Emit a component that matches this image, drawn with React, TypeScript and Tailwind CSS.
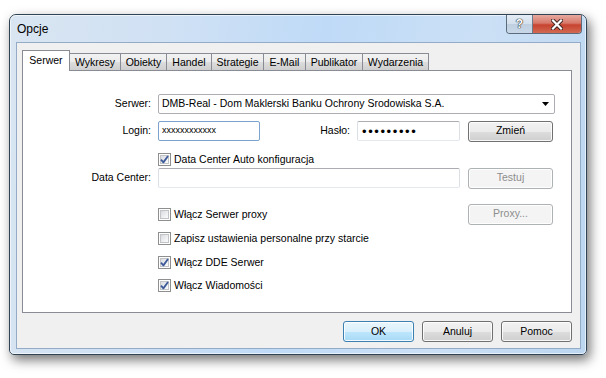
import React from "react";

const btn =
  "h-[21px] rounded-[3px] border text-[10.5px] flex items-center justify-center shadow-[inset_0_0_0_1px_rgba(255,255,255,0.85)]";
const btnNormal =
  "border-[#707070] text-black bg-[linear-gradient(to_bottom,#f2f2f2_0%,#ebebeb_50%,#dddddd_51%,#cfcfcf_100%)]";
const btnDisabled = "border-[#adb2b5] text-[#8d8d8d] bg-[#f4f4f4]";
const btnDefault =
  "border-[#3c7fb1] text-black bg-[linear-gradient(to_bottom,#eaf6fd_0%,#d9f0fc_50%,#bee6fd_51%,#a7d9f5_100%)]";

function Checkbox({ checked, label }: { checked: boolean; label: string }) {
  return (
    <div className="flex items-center h-[13px]">
      <div className="w-[13px] h-[13px] border border-[#8e8f8f] bg-white p-[1px] shrink-0">
        <div className="relative w-full h-full border border-[#c2c4c8] bg-[linear-gradient(135deg,#d8dade_0%,#eef0f2_60%,#fbfbfb_100%)]">
          {checked && (
            <svg
              className="absolute left-[-2px] top-[-2px]"
              width="11"
              height="11"
              viewBox="0 0 11 11"
            >
              <path
                d="M2 5.6 L4.4 8.4 L9 2"
                fill="none"
                stroke="#3d5a99"
                strokeWidth="1.8"
                strokeLinejoin="round"
              />
            </svg>
          )}
        </div>
      </div>
      <span className="ml-[3px] text-[10.5px] leading-none text-black whitespace-nowrap">
        {label}
      </span>
    </div>
  );
}

const tabs = [
  { name: "Wykresy", w: "w-[52px]" },
  { name: "Obiekty", w: "w-[47px]" },
  { name: "Handel", w: "w-[46px]" },
  { name: "Strategie", w: "w-[53px]" },
  { name: "E-Mail", w: "w-[43px]" },
  { name: "Publikator", w: "w-[58px]" },
  { name: "Wydarzenia", w: "w-[67px]" },
];

export default function App() {
  return (
    <div className="w-[606px] h-[378px] bg-white overflow-hidden pt-[14px] pl-[9px] font-['Liberation_Sans',Arial,sans-serif]">
      <div className="relative w-[578px] h-[341px] rounded-t-[7px] rounded-b-[5px] border border-[#2f4355] shadow-[3px_5px_12px_rgba(0,0,0,0.55)] bg-[linear-gradient(100deg,#d9e5f1_0%,#d0e1f4_25%,#bfdaf7_50%,#cbe0f5_75%,#bcd6f0_100%)] flex flex-col">
        <div className="absolute inset-0 rounded-t-[6px] rounded-b-[4px] border border-white/60 pointer-events-none" />
        {/* Title bar */}
        <div className="h-[27px] shrink-0 flex items-center pl-[7px]">
          <span className="text-[12px] text-black">Opcje</span>
        </div>
        {/* Caption buttons */}
        <div className="absolute top-[0px] right-[4px] flex h-[19px] rounded-b-[4px] border border-t-0 border-[#5b6b7c] overflow-hidden">
          <div className="w-[26px] h-full flex items-center justify-center border-r border-[#6b7b8c] bg-[linear-gradient(to_bottom,#e4ecf4_0%,#d3dfec_50%,#bfcfe0_51%,#c9d8e8_100%)]">
            <span className="text-[12px] font-bold text-white [text-shadow:0_0_1px_#2a2a2a,0_0_1px_#2a2a2a,0_0_1px_#2a2a2a]">
              ?
            </span>
          </div>
          <div className="w-[48px] h-full flex items-center justify-center bg-[linear-gradient(to_bottom,#e8a99f_0%,#d6796a_45%,#c7432f_55%,#d26a53_100%)]">
            <svg width="12" height="11" viewBox="0 0 12 11">
              <path d="M2 1.5 L10 9.5 M10 1.5 L2 9.5" stroke="#3a2020" strokeWidth="4" strokeLinecap="square" />
              <path d="M2 1.5 L10 9.5 M10 1.5 L2 9.5" stroke="#ffffff" strokeWidth="2.2" strokeLinecap="square" />
            </svg>
          </div>
        </div>

        {/* Client area */}
        <div className="ml-[6px] w-[565px] h-[307px] border border-[#93abc6] bg-[#f0f0f0] flex flex-col">
          {/* Tabs */}
          <div className="mt-[7px] ml-[5px] h-[20px] flex items-end relative z-10">
            <div className="w-[48px] h-[21px] mb-[-1px] bg-white border border-b-0 border-[#898c95] flex items-start justify-center pt-[4px] text-[10.5px] leading-none">
              Serwer
            </div>
            {tabs.map((t) => (
              <div
                key={t.name}
                className={`${t.w} h-[17px] -ml-[1px] border border-b-0 border-[#898c95] bg-[linear-gradient(to_bottom,#f2f2f2_0%,#ebebeb_50%,#dddddd_51%,#cfcfcf_100%)] flex items-center justify-center text-[10.5px] leading-none`}
              >
                {t.name}
              </div>
            ))}
          </div>
          {/* Panel */}
          <div className="ml-[5px] w-[550px] h-[243px] bg-white border border-[#898c95] flex flex-col text-[10.5px] text-black">
            {/* Row 1 */}
            <div className="mt-[23px] h-[20px] flex items-center">
              <div className="w-[128px] text-right">Serwer:</div>
              <div className="ml-[7px] w-[397px] h-[20px] border border-[#abadb3] rounded-[2px] flex items-center pl-[3px] pr-[5px] justify-between">
                <span>DMB-Real - Dom Maklerski Banku Ochrony Srodowiska S.A.</span>
                <svg width="7" height="4" viewBox="0 0 7 4">
                  <path d="M0 0 L7 0 L3.5 4 Z" fill="#000" />
                </svg>
              </div>
            </div>
            {/* Row 2 */}
            <div className="mt-[7px] h-[20px] flex items-center">
              <div className="w-[128px] text-right">Login:</div>
              <div className="ml-[7px] w-[102px] h-[20px] border border-[#7da2ce] rounded-[2px] flex items-center pl-[3px] text-[9px]">
                xxxxxxxxxxxx
              </div>
              <div className="w-[90px] text-right">Hasło:</div>
              <div className="ml-[7px] w-[103px] h-[20px] border border-[#abadb3] border-b-[#e3e9ef] border-x-[#dbdfe6] rounded-[2px] flex items-center pl-[4px] text-[13px] tracking-[1.6px] leading-none">
                •••••••••
              </div>
              <div className={`ml-[8px] w-[85px] ${btn} ${btnNormal}`}>Zmień</div>
            </div>
            {/* Row 3 */}
            <div className="mt-[12px] ml-[135px]">
              <Checkbox checked label="Data Center Auto konfiguracja" />
            </div>
            {/* Row 4 */}
            <div className="mt-[2px] h-[20px] flex items-center">
              <div className="w-[128px] text-right">Data Center:</div>
              <div className="ml-[7px] w-[302px] h-[20px] border border-[#abadb3] border-b-[#e3e9ef] border-x-[#dbdfe6] rounded-[2px]" />
              <div className={`ml-[8px] w-[85px] ${btn} ${btnDisabled}`}>Testuj</div>
            </div>
            {/* Row 5 */}
            <div className="mt-[16px] h-[20px] flex items-center">
              <div className="ml-[135px] w-[310px]">
                <Checkbox checked={false} label="Włącz Serwer proxy" />
              </div>
              <div className={`w-[85px] ${btn} ${btnDisabled}`}>Proxy...</div>
            </div>
            <div className="mt-[8px] ml-[135px]">
              <Checkbox checked={false} label="Zapisz ustawienia personalne przy starcie" />
            </div>
            <div className="mt-[11px] ml-[135px]">
              <Checkbox checked label="Włącz DDE Serwer" />
            </div>
            <div className="mt-[10px] ml-[135px]">
              <Checkbox checked label="Włącz Wiadomości" />
            </div>
          </div>
          {/* Bottom buttons */}
          <div className="ml-[5px] w-[550px] mt-[8px] flex justify-end gap-[8px]">
            <div className={`w-[71px] ${btn} ${btnDefault}`}>OK</div>
            <div className={`w-[71px] ${btn} ${btnNormal}`}>Anuluj</div>
            <div className={`w-[71px] ${btn} ${btnNormal}`}>Pomoc</div>
          </div>
        </div>
      </div>
    </div>
  );
}
